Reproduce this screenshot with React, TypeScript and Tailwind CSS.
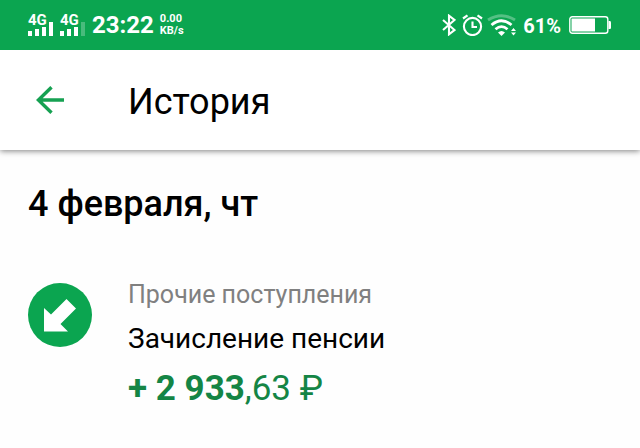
const SIGNAL_BARS = [
  { x: 0, y: 9, height: 5 },
  { x: 7, y: 7, height: 7 },
  { x: 14, y: 5, height: 9 },
  { x: 21, y: 0, height: 14 },
]

const Signal = ({ level }: { level: number }) => (
  <div className="flex flex-col">
    <span className="h-2 text-[15px] leading-3 font-bold">4G</span>
    <svg width="26" height="14" viewBox="0 0 26 14" fill="currentColor">
      {SIGNAL_BARS.map((bar, i) => (
        <rect
          key={i}
          x={bar.x}
          y={bar.y}
          width="4"
          height={bar.height}
          opacity={i < level ? 1 : 0.25}
        />
      ))}
    </svg>
  </div>
)

const BluetoothIcon = () => (
  <svg width="14" height="22" viewBox="0 0 14 22" fill="none" stroke="currentColor" strokeWidth="2.1">
    <path d="M1 6 L12.5 16 L7 20.3 V1.7 L12.5 6 L1 16" />
  </svg>
)

const AlarmIcon = () => (
  <svg width="21" height="22" viewBox="0 0 21 22" fill="none" stroke="currentColor" strokeWidth="2.1">
    <circle cx="10.5" cy="12.5" r="8.6" />
    <path d="M10.5 7.5 V13 H15" />
    <path d="M1 4.5 L5.5 1.3 M20 4.5 L15.5 1.3" strokeWidth="2.2" />
  </svg>
)

const WifiIcon = () => (
  <svg width="30" height="22" viewBox="0 0 30 22" fill="none" stroke="currentColor">
    <path d="M1 6 Q14.5 -2.5 28 6" strokeWidth="3" opacity="0.3" />
    <path d="M4.5 11 Q14.5 2.5 24.5 11" strokeWidth="2.8" />
    <path d="M8.5 15.2 Q14.5 10 20.5 15.2" strokeWidth="2.8" />
    <path d="M11 18.5 Q14.5 15.5 18 18.5 L14.5 22 Z" fill="currentColor" stroke="none" />
    <path d="M24 17 L26.5 14 L29 17 Z M24 18.5 L26.5 21.5 L29 18.5 Z" fill="currentColor" stroke="none" />
  </svg>
)

const BatteryIcon = () => (
  <svg width="43" height="18" viewBox="0 0 43 18" fill="none" stroke="currentColor">
    <rect x="0.8" y="0.8" width="38" height="16.4" rx="2.5" strokeWidth="1.4" />
    <rect x="2.5" y="2.5" width="23.5" height="13" fill="currentColor" stroke="none" />
    <path d="M39.5 5 H41 Q42 5 42 6.5 V11.5 Q42 13 41 13 H39.5 Z" fill="currentColor" stroke="none" />
  </svg>
)

const StatusBar = () => (
  <div className="relative z-10 flex h-[50px] items-center justify-between bg-[#0ba550] px-7 text-white">
    <div className="flex items-center">
      <div className="flex gap-1.5">
        <Signal level={4} />
        <Signal level={3} />
      </div>
      <span className="ml-1.5 text-2xl font-bold">23:22</span>
      <div className="ml-1.5 flex flex-col text-[11px] leading-3 font-bold">
        <span>0.00</span>
        <span>KB/s</span>
      </div>
    </div>
    <div className="flex items-center">
      <BluetoothIcon />
      <div className="ml-1.5 flex gap-1">
        <AlarmIcon />
        <WifiIcon />
      </div>
      <span className="ml-1.5 pt-0.5 text-xl font-bold">61%</span>
      <div className="ml-2">
        <BatteryIcon />
      </div>
    </div>
  </div>
)

const Header = () => (
  <header className="flex h-[100px] items-center bg-white pl-7 shadow-[0_1px_6px_rgba(0,0,0,0.5)]">
    <button aria-label="Назад" className="mr-14 p-2 text-[#16a152]">
      <svg width="28" height="28" viewBox="0 0 28 28" fill="none" stroke="currentColor" strokeWidth="3.4">
        <path d="M28 14 H2.5 M15.5 1.2 L2.4 14 L15.5 26.8" />
      </svg>
    </button>
    <h1 className="pt-1 text-4xl">История</h1>
  </header>
)

const Operation = () => (
  <li className="flex gap-9">
    <svg className="mt-1 shrink-0" width="64" height="64" viewBox="0 0 64 64">
      <circle cx="32" cy="32" r="32" fill="#0ba550" />
      <path d="M38.5 16 L48 25.5 L32.5 41 L40 48.5 H16 V25 L23 31.5 Z" fill="#fff" />
    </svg>
    <div>
      <p className="text-[25px] leading-8 text-[#808080]">Прочие поступления</p>
      <p className="mt-2 text-[28px] leading-10">Зачисление пенсии</p>
      <p className="mt-2 text-[35px] leading-11 text-[#148545]">
        <span className="font-bold">+ 2 933</span>,63 ₽
      </p>
    </div>
  </li>
)

export default function App() {
  return (
    <div className="min-h-screen bg-[#fefefe] font-[Roboto,sans-serif] text-black">
      <StatusBar />
      <Header />
      <main className="px-7 pt-8">
        <h2 className="text-4xl leading-11 font-medium">4 февраля, чт</h2>
        <ul className="mt-[53px]">
          <Operation />
        </ul>
      </main>
    </div>
  )
}
